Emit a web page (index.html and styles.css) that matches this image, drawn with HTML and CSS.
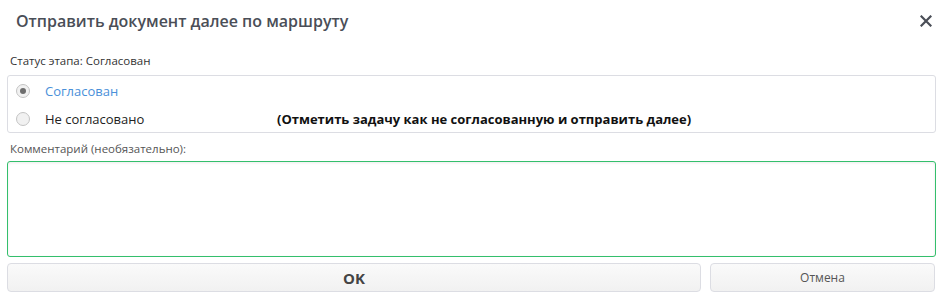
FILE: index.html
```html
<!DOCTYPE html>
<html lang="ru">
<head>
<meta charset="utf-8">
<link rel="stylesheet" href="styles.css">
</head>
<body>
<div class="dialog">
  <div class="header">
    <div class="title">Отправить документ далее по маршруту</div>
    <svg class="close" width="12" height="12" viewBox="0 0 12 12"><path d="M1.5 1.5 L10.5 10.5 M10.5 1.5 L1.5 10.5" stroke="#4a4e57" stroke-width="2.2" stroke-linecap="square"/></svg>
  </div>
  <div class="status">Статус этапа: Согласован</div>
  <div class="options">
    <div class="opt">
      <span class="radio checked"></span>
      <span class="opt-label blue">Согласован</span>
    </div>
    <div class="opt">
      <span class="radio"></span>
      <span class="opt-label">Не согласовано</span>
      <span class="hint">(Отметить задачу как не согласованную и отправить далее)</span>
    </div>
  </div>
  <div class="comment-label">Комментарий (необязательно):</div>
  <textarea class="comment"></textarea>
  <div class="buttons">
    <button class="btn ok">OK</button>
    <button class="btn cancel">Отмена</button>
  </div>
</div>
</body>
</html>
```
FILE: styles.css
```css
* { box-sizing: border-box; }
body {
  margin: 0;
  background: #fff;
  font-family: "Open Sans", "Noto Sans", sans-serif;
  color: #333;
}
.dialog {
  width: 945px;
  height: 299px;
  padding: 0 9px 0 7px;
  display: flex;
  flex-direction: column;
}
.header {
  display: flex;
  align-items: center;
  justify-content: space-between;
  height: 42px;
  padding: 0 4px 0 9px;
}
.title {
  font-size: 16px;
  font-weight: 600;
  color: #4a4e57;
}
.close { display: block; margin-top: -1px; }
.status {
  font-size: 11.5px;
  color: #333;
  padding-left: 3px;
  margin-top: 11px;
  line-height: 15px;
}
.options {
  margin-top: 7px;
  border: 1px solid #dcdde3;
  border-radius: 3px;
  height: 58px;
  padding-top: 1px;
}
.opt {
  display: flex;
  align-items: center;
  height: 28px;
  padding-left: 8px;
}
.radio {
  width: 14px;
  height: 14px;
  border-radius: 50%;
  border: 1px solid #c4c4c4;
  background: #f1f1f1;
  display: flex;
  align-items: center;
  justify-content: center;
  flex: none;
}
.radio.checked::after {
  content: "";
  width: 6px;
  height: 6px;
  border-radius: 50%;
  background: #6d6d6d;
}
.opt-label {
  font-size: 13px;
  margin-left: 15px;
  width: 232px;
  color: #222;
}
.opt-label.blue { color: #4a90d9; }
.hint {
  font-size: 13px;
  font-weight: bold;
  color: #111;
}
.comment-label {
  font-size: 11.5px;
  color: #555;
  padding-left: 3px;
  margin-top: 8px;
  line-height: 15px;
}
.comment {
  display: block;
  margin-top: 5px;
  width: 929px;
  height: 96px;
  border: 1px solid #34bf6c;
  border-radius: 3px;
  box-shadow: inset 0 1px 3px rgba(0,0,0,0.08);
  resize: none;
  outline: none;
  font-family: inherit;
}
.buttons {
  display: flex;
  gap: 9px;
  margin-top: 6px;
  width: 928px;
}
.btn {
  height: 29px;
  border: 1px solid #dcdde3;
  border-radius: 4px;
  background: linear-gradient(#fafafa, #f1f1f1);
  font-family: inherit;
  color: #333;
  padding: 0;
}
.ok {
  width: 694px;
  font-size: 15px;
  font-weight: bold;
  color: #444;
}
.cancel {
  flex: 1;
  font-size: 12px;
  color: #555;
}
```
